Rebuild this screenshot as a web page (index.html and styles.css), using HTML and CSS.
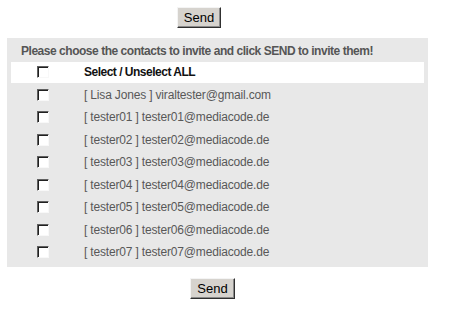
FILE: index.html
```html
<!DOCTYPE html>
<html>
<head>
<meta charset="utf-8">
<link rel="stylesheet" href="styles.css">
</head>
<body>
<div class="bar bar-top"><button class="send">Send</button></div>
<div class="panel">
  <div class="head">Please choose the contacts to invite and click SEND to invite them!</div>
  <div class="row all"><span class="cb"></span><span class="label">Select / Unselect ALL</span></div>
  <div class="row"><span class="cb"></span><span class="label">[ Lisa Jones ] viraltester@gmail.com</span></div>
  <div class="row"><span class="cb"></span><span class="label">[ tester01 ] tester01@mediacode.de</span></div>
  <div class="row"><span class="cb"></span><span class="label">[ tester02 ] tester02@mediacode.de</span></div>
  <div class="row"><span class="cb"></span><span class="label">[ tester03 ] tester03@mediacode.de</span></div>
  <div class="row"><span class="cb"></span><span class="label">[ tester04 ] tester04@mediacode.de</span></div>
  <div class="row"><span class="cb"></span><span class="label">[ tester05 ] tester05@mediacode.de</span></div>
  <div class="row"><span class="cb"></span><span class="label">[ tester06 ] tester06@mediacode.de</span></div>
  <div class="row"><span class="cb"></span><span class="label">[ tester07 ] tester07@mediacode.de</span></div>
</div>
<div class="bar bar-bottom"><button class="send">Send</button></div>
</body>
</html>
```
FILE: styles.css
```css
html, body {
  margin: 0;
  padding: 0;
  background: #fff;
  font-family: "Liberation Sans", Arial, sans-serif;
}
.bar {
  display: flex;
}
.bar-top {
  padding: 7px 0 0 177px;
  margin-bottom: 10px;
}
.bar-bottom {
  padding: 11px 0 0 190px;
}
.send {
  width: 44px;
  height: 21px;
  padding: 0;
  background: #d6d3ce;
  border: 1px solid;
  border-color: #f4f4f4 #303030 #303030 #f4f4f4;
  box-shadow: inset -1px -1px 0 #8a8a8a;
  font-family: "Liberation Sans", Arial, sans-serif;
  font-size: 13px;
  color: #000;
}
.bar-bottom .send {
  width: 45px;
}
.panel {
  margin-left: 7px;
  width: 413px;
  padding: 4px 4px 4.5px;
  background: #e8e8e8;
  display: flex;
  flex-direction: column;
  gap: 2px;
}
.head {
  height: 18px;
  line-height: 19px;
  padding-left: 10px;
  font-size: 12px;
  font-weight: bold;
  letter-spacing: -0.47px;
  color: #555;
}
.row {
  height: 20.5px;
  display: grid;
  grid-template-columns: 64px 1fr;
  align-items: center;
  font-size: 12px;
  letter-spacing: -0.17px;
  color: #585858;
}
.row.all {
  background: #fff;
  font-weight: bold;
  letter-spacing: -0.5px;
  color: #111;
}
.cb {
  justify-self: center;
  width: 12px;
  height: 12px;
  box-sizing: border-box;
  background: #fff;
  border: 1px solid;
  border-color: #606060 #f8f8f8 #f8f8f8 #606060;
  box-shadow: inset 1px 1px 0 #202020;
}
.label {
  padding-left: 9px;
}
```
